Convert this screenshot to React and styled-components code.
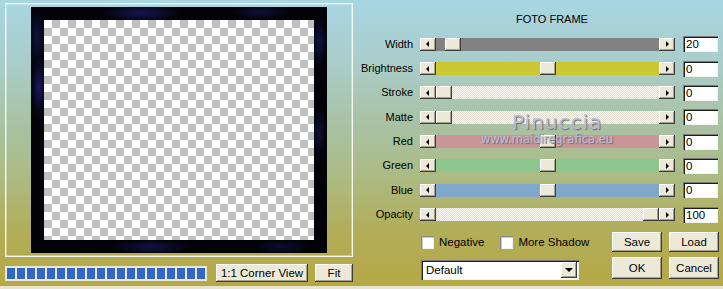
import React from 'react';
import styled, { createGlobalStyle, css } from 'styled-components';

const GlobalStyle = createGlobalStyle`
  html, body {
    margin: 0;
    padding: 0;
  }
  body {
    font-family: "Liberation Sans", Arial, sans-serif;
    font-size: 11px;
    color: #000;
  }
`;

const raised = css`
  background: #ece9d8;
  box-shadow: inset -1px -1px #3c3c3c, inset 1px 1px #ffffff, inset -2px -2px #a5a291;
`;

const sunken = css`
  background: #fff;
  box-shadow: inset 1px 1px #7a7a7a, inset 2px 2px #1c1c1c, inset -1px -1px #f4f2ea;
`;

const Window = styled.div`
  position: relative;
  width: 723px;
  height: 289px;
  box-sizing: border-box;
  overflow: hidden;
  display: flex;
  background: linear-gradient(
    180deg,
    #a8d6e3 0%,
    #a9cdc9 22%,
    #a9c1a1 45%,
    #acbb83 62%,
    #b2ad57 82%,
    #b5a846 100%
  );
  border-bottom: 3px solid #e9e4cf;
`;

const LeftCol = styled.div`
  width: 360px;
  box-sizing: border-box;
  padding: 3px 0 0 5px;
  display: flex;
  flex-direction: column;
`;

const Preview = styled.div`
  width: 348px;
  height: 254px;
  box-sizing: border-box;
  border: 1px solid #f7f7f2;
  box-shadow: inset 0 0 0 1px rgba(255, 255, 255, 0.35);
  display: flex;
  align-items: center;
  justify-content: center;
`;

const Frame = styled.div`
  width: 296px;
  height: 246px;
  box-sizing: border-box;
  padding: 13px;
  display: flex;
  background-color: #020208;
  background-image:
    radial-gradient(ellipse 40px 10px at 110px 6px, rgba(30, 30, 110, 0.7), transparent),
    radial-gradient(ellipse 30px 8px at 230px 5px, rgba(30, 30, 110, 0.5), transparent),
    radial-gradient(ellipse 8px 30px at 6px 30px, rgba(30, 30, 110, 0.6), transparent),
    radial-gradient(ellipse 8px 30px at 8px 80px, rgba(30, 30, 120, 0.8), transparent),
    radial-gradient(ellipse 8px 25px at 288px 35px, rgba(30, 30, 110, 0.6), transparent),
    radial-gradient(ellipse 8px 25px at 288px 125px, rgba(30, 30, 110, 0.5), transparent),
    radial-gradient(ellipse 40px 8px at 120px 240px, rgba(30, 30, 110, 0.6), transparent),
    radial-gradient(ellipse 30px 8px at 250px 240px, rgba(30, 30, 110, 0.4), transparent);
`;

const Checker = styled.div`
  flex: 1;
  background-color: #fff;
  background-image: conic-gradient(
    #c0c0c0 0 25%,
    #ffffff 0 50%,
    #c0c0c0 0 75%,
    #ffffff 0
  );
  background-size: 16px 16px;
`;

const BottomBar = styled.div`
  margin-top: 7px;
  display: flex;
  align-items: center;
  gap: 7px;
`;

const Progress = styled.div`
  width: 202px;
  height: 15px;
  box-sizing: border-box;
  padding: 2px 1px 2px 2px;
  margin-right: 2px;
  background: #ebe7d3;
  display: flex;
  gap: 2px;
`;

const Segment = styled.div`
  width: 8px;
  background: #3168c8;
`;

const Button = styled.button`
  ${raised};
  border: none;
  margin: 0;
  padding: 0;
  width: ${(p) => p.$w}px;
  height: ${(p) => p.$h || 18}px;
  font-family: "Liberation Sans", Arial, sans-serif;
  font-size: 11.5px;
  color: #000;
  display: flex;
  align-items: center;
  justify-content: center;
`;

const RightCol = styled.div`
  flex: 1;
  display: flex;
  flex-direction: column;
  padding-right: 4px;
`;

const Title = styled.div`
  height: 32px;
  box-sizing: border-box;
  padding: 12px 0 0 25px;
  text-align: center;
  font-size: 11px;
  line-height: 14px;
`;

const Rows = styled.div`
  display: grid;
  grid-template-columns: 53px 255px 36px;
  grid-auto-rows: 24.35px;
  column-gap: 7px;
  align-items: center;
`;

const Label = styled.div`
  text-align: right;
  font-size: 11px;
  line-height: 13px;
  white-space: nowrap;
`;

const SliderBox = styled.div`
  display: flex;
  height: 13px;
`;

const ArrowBtn = styled.div`
  ${raised};
  width: 16px;
  flex: 0 0 16px;
  display: flex;
  align-items: center;
  justify-content: center;
`;

const Tri = styled.span`
  width: 0;
  height: 0;
  border-top: 3px solid transparent;
  border-bottom: 3px solid transparent;
  ${(p) =>
    p.$dir === 'left'
      ? 'border-right: 3px solid #000; margin-right: 1px;'
      : 'border-left: 3px solid #000; margin-left: 1px;'}
`;

const Track = styled.div`
  flex: 1;
  display: flex;
  background: ${(p) => p.$bg};
  ${(p) =>
    p.$dither &&
    css`
      background: repeating-conic-gradient(#e2dfd2 0 25%, #f9f8f1 0 50%) 0 0 / 2px 2px;
    `}
`;

const Thumb = styled.div`
  ${raised};
  width: 16px;
  flex: 0 0 16px;
`;

const NumBox = styled.div`
  ${sunken};
  height: 16px;
  margin-left: 1px;
  box-sizing: border-box;
  padding: 2px 0 0 3px;
  font-size: 11.5px;
  line-height: 13px;
`;

const BottomGrid = styled.div`
  margin-top: 5px;
  padding-left: 61px;
  display: grid;
  grid-template-columns: 1fr 50px 50px;
  grid-template-rows: 20px 22px;
  column-gap: 7px;
  row-gap: 5px;
`;

const Checks = styled.div`
  display: flex;
  align-items: center;
  gap: 16px;
  padding-top: 1px;
`;

const CheckItem = styled.label`
  display: flex;
  align-items: center;
  gap: 5px;
  font-size: 11.5px;
`;

const Box = styled.span`
  ${sunken};
  width: 13px;
  height: 13px;
  box-shadow: inset 1px 1px #8a8a8a, inset 2px 2px #c8c8c8, inset -1px -1px #f4f2ea;
`;

const Select = styled.div`
  ${sunken};
  width: 158px;
  height: 20px;
  margin-top: 3px;
  box-sizing: border-box;
  padding: 2px;
  display: flex;
  align-items: center;
  font-size: 11.5px;
`;

const SelectText = styled.span`
  flex: 1;
  padding-left: 3px;
`;

const SelectArrow = styled.div`
  ${raised};
  width: 16px;
  height: 16px;
  display: flex;
  align-items: center;
  justify-content: center;
`;

const DownTri = styled.span`
  width: 0;
  height: 0;
  border-left: 4px solid transparent;
  border-right: 4px solid transparent;
  border-top: 4px solid #000;
  margin-top: 1px;
`;

const Mark = styled.div`
  position: absolute;
  left: ${(p) => p.$x}px;
  top: ${(p) => p.$y}px;
  font-family: "DejaVu Sans", sans-serif;
  font-size: ${(p) => p.$size}px;
  color: #bcbcdc;
  text-shadow: 1px 1px 1px #6a6a6a;
  white-space: nowrap;
  pointer-events: none;
  letter-spacing: ${(p) => p.$ls || 0}px;
`;

const sliders = [
  { label: 'Width', value: '20', pos: 0.044, bg: '#818181' },
  { label: 'Brightness', value: '0', pos: 0.5, bg: '#cac934' },
  { label: 'Stroke', value: '0', pos: 0, dither: true },
  { label: 'Matte', value: '0', pos: 0, dither: true },
  { label: 'Red', value: '0', pos: 0.5, bg: '#c99597' },
  { label: 'Green', value: '0', pos: 0.5, bg: '#8ec68f' },
  { label: 'Blue', value: '0', pos: 0.5, bg: '#80a8c9' },
  { label: 'Opacity', value: '100', pos: 1, dither: true },
];

const TRAVEL = 207;

function Slider({ pos, bg, dither }) {
  return (
    <SliderBox>
      <ArrowBtn>
        <Tri $dir="left" />
      </ArrowBtn>
      <Track $bg={bg} $dither={dither}>
        <Thumb style={{ marginLeft: Math.round(pos * TRAVEL) }} />
      </Track>
      <ArrowBtn>
        <Tri $dir="right" />
      </ArrowBtn>
    </SliderBox>
  );
}

export default function App() {
  return (
    <Window>
      <GlobalStyle />
      <LeftCol>
        <Preview>
          <Frame>
            <Checker />
          </Frame>
        </Preview>
        <BottomBar>
          <Progress>
            {Array.from({ length: 20 }).map((_, i) => (
              <Segment key={i} />
            ))}
          </Progress>
          <Button $w={92}>1:1 Corner View</Button>
          <Button $w={38}>Fit</Button>
        </BottomBar>
      </LeftCol>

      <RightCol>
        <Title>FOTO FRAME</Title>
        <Rows>
          {sliders.map((s) => (
            <React.Fragment key={s.label}>
              <Label>{s.label}</Label>
              <Slider pos={s.pos} bg={s.bg} dither={s.dither} />
              <NumBox>{s.value}</NumBox>
            </React.Fragment>
          ))}
        </Rows>
        <BottomGrid>
          <Checks>
            <CheckItem>
              <Box />
              Negative
            </CheckItem>
            <CheckItem>
              <Box />
              More Shadow
            </CheckItem>
          </Checks>
          <Button $w={50} $h={20}>Save</Button>
          <Button $w={50} $h={20}>Load</Button>
          <Select>
            <SelectText>Default</SelectText>
            <SelectArrow>
              <DownTri />
            </SelectArrow>
          </Select>
          <Button $w={50} $h={22}>OK</Button>
          <Button $w={50} $h={22}>Cancel</Button>
        </BottomGrid>
      </RightCol>

      <Mark $x={512} $y={110} $size={20} $ls={1}>Pinuccia</Mark>
      <Mark $x={481} $y={132} $size={11.5}>www.maidiregrafica.eu</Mark>
    </Window>
  );
}
